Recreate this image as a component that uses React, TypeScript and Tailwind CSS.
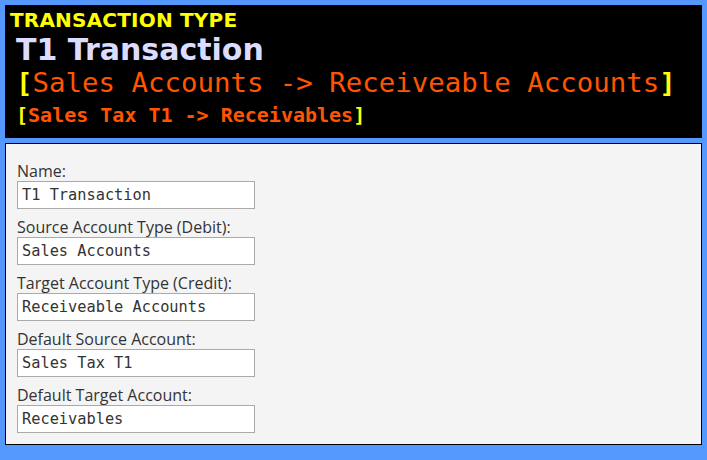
const fields = [
  { label: 'Name:', value: 'T1 Transaction' },
  { label: 'Source Account Type (Debit):', value: 'Sales Accounts' },
  { label: 'Target Account Type (Credit):', value: 'Receiveable Accounts' },
  { label: 'Default Source Account:', value: 'Sales Tax T1' },
  { label: 'Default Target Account:', value: 'Receivables' },
];

export default function App() {
  return (
    <div className="min-h-screen w-full bg-[#5599ff] p-[5px]">
      {/* Header */}
      <div className="h-[133px] bg-black pl-[5px] pt-[3px]">
        <div className="text-[20px] leading-[24px] font-black text-[#ffff00] font-['DejaVu_Sans',sans-serif] tracking-[0.2px]">
          TRANSACTION TYPE
        </div>
        <div className="pl-[6px] text-[30px] leading-[36px] font-bold text-[#dcdcff] font-['DejaVu_Sans',sans-serif]">
          T1 Transaction
        </div>
        <div className="pl-[6px] text-[27.4px] leading-[30px] text-[#ff5500] font-['DejaVu_Sans_Mono',monospace]">
          <span className="text-[#ffff00] font-bold">[</span>
          Sales Accounts -&gt; Receiveable Accounts
          <span className="text-[#ffff00] font-bold">]</span>
        </div>
        <div className="pl-[6px] mt-[5px] text-[20px] leading-[24px] font-bold text-[#ff5500] font-['DejaVu_Sans_Mono',monospace]">
          <span className="text-[#ffff00]">[</span>
          Sales Tax T1 -&gt; Receivables
          <span className="text-[#ffff00]">]</span>
        </div>
      </div>

      {/* Form */}
      <div className="mt-[5px] h-[302px] border border-black bg-[#f4f4f4] px-[11px] pt-[17px]">
        {fields.map((f) => (
          <div key={f.label} className="mb-[8px]">
            <div className="text-[16px] leading-[20px] text-[#333] font-['Open_Sans',sans-serif]">
              {f.label}
            </div>
            <div className="w-[238px] h-[28px] border border-[#aaa] bg-white px-[4px] flex items-center text-[15.3px] text-[#333] font-['DejaVu_Sans_Mono',monospace]">
              {f.value}
            </div>
          </div>
        ))}
      </div>
    </div>
  );
}
